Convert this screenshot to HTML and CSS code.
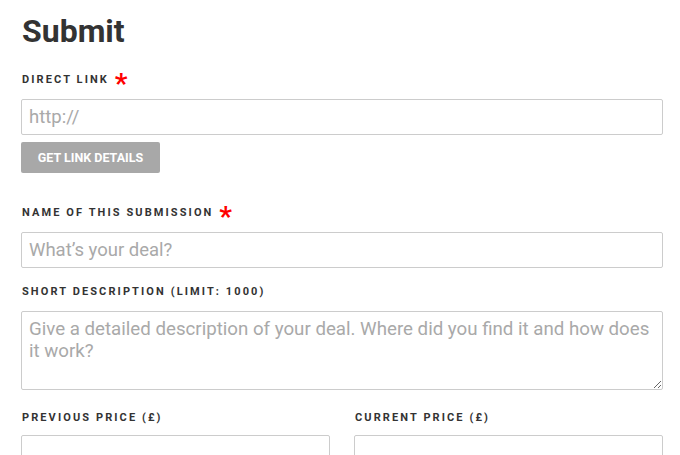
FILE: index.html
```html
<!DOCTYPE html>
<html>
<head>
<meta charset="utf-8">
<link rel="stylesheet" href="styles.css">
</head>
<body>
<form class="form">
  <h1 class="title">Submit</h1>
  <div class="field field-link">
    <label class="label">Direct link <span class="req">*</span></label>
    <input class="input" type="text" placeholder="http://">
    <button type="button" class="btn">Get link details</button>
  </div>
  <div class="field field-name">
    <label class="label">Name of this submission <span class="req">*</span></label>
    <input class="input" type="text" placeholder="What’s your deal?">
  </div>
  <div class="field field-desc">
    <label class="label">Short description (limit: 1000)</label>
    <textarea class="textarea" placeholder="Give a detailed description of your deal. Where did you find it and how does it work?"></textarea>
  </div>
  <div class="row">
    <div class="field">
      <label class="label label-price">Previous price (£)</label>
      <input class="input" type="text">
    </div>
    <div class="field">
      <label class="label label-price">Current price (£)</label>
      <input class="input" type="text">
    </div>
  </div>
</form>
</body>
</html>
```
FILE: styles.css
```css
html, body {
  margin: 0;
  padding: 0;
  background: #fff;
}
body {
  font-family: Roboto, "Liberation Sans", sans-serif;
  color: #333;
}
.form {
  width: 642px;
  padding: 0 0 0 21px;
  display: flex;
  flex-direction: column;
}
.title {
  margin: 11px 0 0 1px;
  font-size: 32px;
  line-height: 40px;
  font-weight: 700;
  color: #333;
}
.field {
  display: flex;
  flex-direction: column;
}
.field-link {
  margin-top: 21px;
}
.field-name {
  margin-top: 32px;
}
.field-desc {
  margin-top: 16px;
}
.row {
  margin-top: 20px;
  display: grid;
  grid-template-columns: 1fr 1fr;
  column-gap: 24px;
}
.label {
  display: block;
  font-size: 11px;
  font-weight: 700;
  letter-spacing: 2.1px;
  text-transform: uppercase;
  line-height: 16px;
  height: 16px;
  margin: 0 0 11px 1px;
  color: #333;
}
.label-price {
  margin-bottom: 9px;
}
.req {
  color: #f00;
  font-size: 28px;
  font-weight: 700;
  line-height: 0;
  letter-spacing: 0;
  vertical-align: -10px;
  margin-left: 1px;
}
.input, .textarea {
  box-sizing: border-box;
  width: 100%;
  border: 1px solid #ccc;
  border-radius: 2px;
  font-family: Roboto, "Liberation Sans", sans-serif;
  font-size: 18.5px;
  color: #333;
  padding: 0 7px;
  margin: 0;
  outline: none;
  background: #fff;
}
.input {
  height: 36px;
}
.textarea {
  display: block;
  height: 79px;
  padding: 6px 7px;
  font-size: 18.7px;
  line-height: 22px;
  resize: vertical;
}
.input::placeholder, .textarea::placeholder {
  color: #a9a9a9;
  opacity: 1;
}
.btn {
  align-self: flex-start;
  margin-top: 7px;
  height: 31px;
  width: 139px;
  padding: 0;
  border: 0;
  border-radius: 2px;
  background: #a8a8a8;
  color: #fff;
  font-family: Roboto, "Liberation Sans", sans-serif;
  font-size: 12.5px;
  font-weight: 700;
  text-transform: uppercase;
}
```
